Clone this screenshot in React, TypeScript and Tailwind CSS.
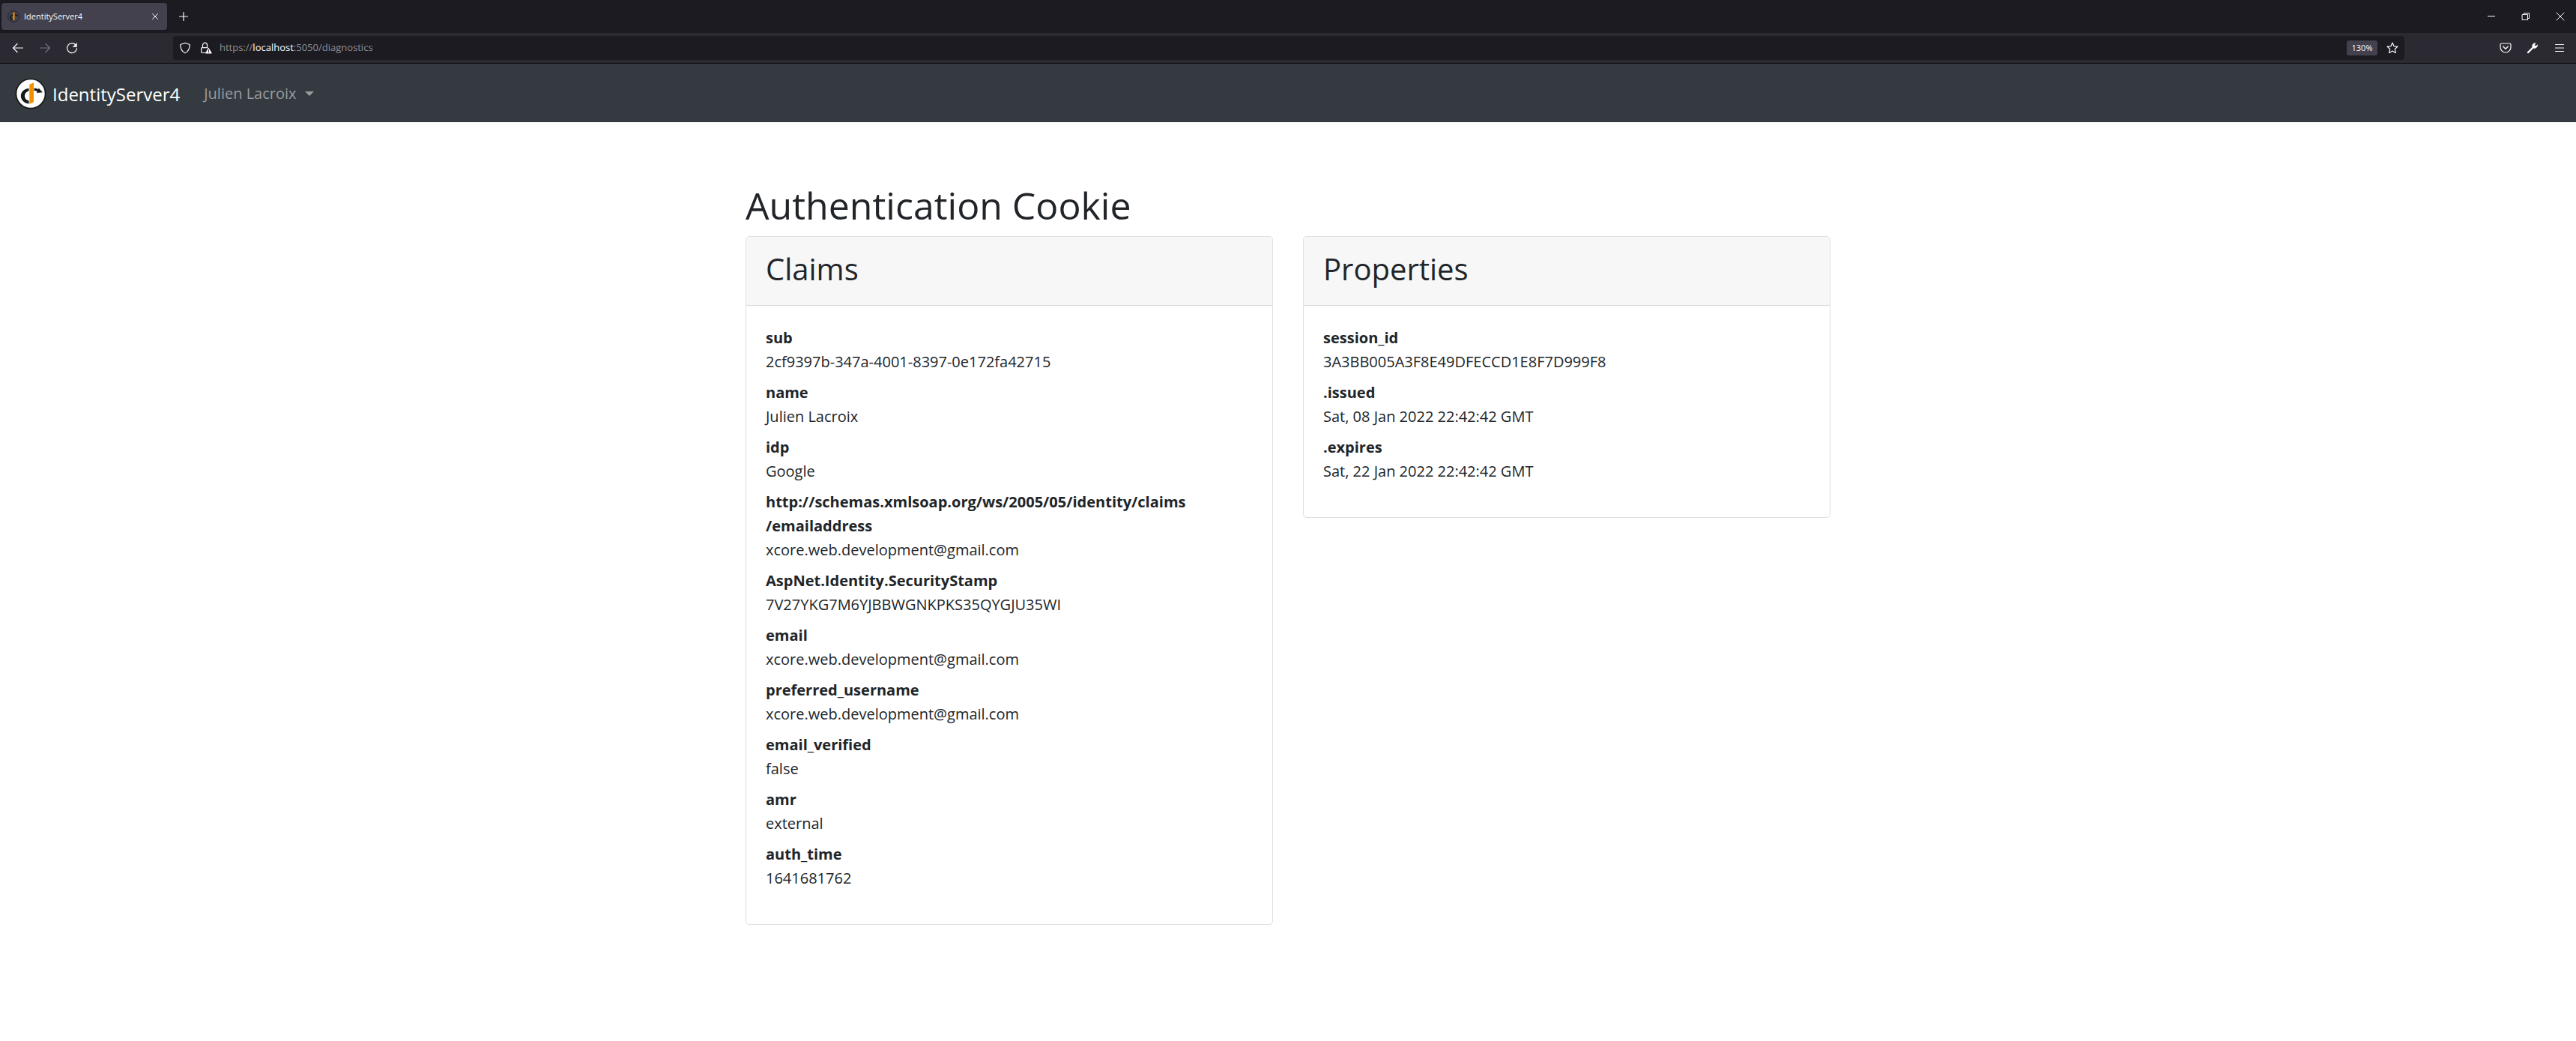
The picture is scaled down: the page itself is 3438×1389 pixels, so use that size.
import { ReactNode } from "react";

type Entry = { term: string; value: string };

const claims: Entry[] = [
  { term: "sub", value: "2cf9397b-347a-4001-8397-0e172fa42715" },
  { term: "name", value: "Julien Lacroix" },
  { term: "idp", value: "Google" },
  { term: "http://schemas.xmlsoap.org/ws/2005/05/identity/claims\n/emailaddress", value: "xcore.web.development@gmail.com" },
  { term: "AspNet.Identity.SecurityStamp", value: "7V27YKG7M6YJBBWGNKPKS35QYGJU35WI" },
  { term: "email", value: "xcore.web.development@gmail.com" },
  { term: "preferred_username", value: "xcore.web.development@gmail.com" },
  { term: "email_verified", value: "false" },
  { term: "amr", value: "external" },
  { term: "auth_time", value: "1641681762" },
];

const properties: Entry[] = [
  { term: "session_id", value: "3A3BB005A3F8E49DFECCD1E8F7D999F8" },
  { term: ".issued", value: "Sat, 08 Jan 2022 22:42:42 GMT" },
  { term: ".expires", value: "Sat, 22 Jan 2022 22:42:42 GMT" },
];

function Logo({ disc, className }: { disc: string; className: string }) {
  return (
    <svg viewBox="0 0 42 42" className={className} aria-hidden="true">
      <circle cx="21" cy="21" r="19.6" fill={disc} stroke="#18191b" strokeWidth="1.8" />
      <path d="M18.500 14C12 14.500 7.800 19 7.800 24c0 5.500 4.500 9.800 10.700 10.500v-4.300c-3.300-.6-5.500-3-5.500-6 0-3.200 2-6 5.500-6.700z" fill="#18191b" />
      <path d="M25.500 13.800c2 0 4 .4 5.600 1.400l.5-1.700 5.400 5.700-8.200.9 1-1.900c-1.300-.9-2.700-1.300-4.300-1.400z" fill="#18191b" />
      <path d="M19.300 8.700L25 6.200v26l-5.700 2.500z" fill="#f29100" />
    </svg>
  );
}

function Icon({ children, className = "" }: { children: ReactNode; className?: string }) {
  return (
    <svg
      viewBox="0 0 16 16"
      fill="none"
      stroke="currentColor"
      strokeWidth="1.2"
      strokeLinecap="round"
      strokeLinejoin="round"
      className={"size-4 " + className}
      aria-hidden="true"
    >
      {children}
    </svg>
  );
}

function IconButton({ label, className, children }: { label: string; className: string; children: ReactNode }) {
  return (
    <button type="button" aria-label={label} className={"flex h-8 shrink-0 items-center justify-center " + className}>
      {children}
    </button>
  );
}

function Card({ title, entries }: { title: string; entries: Entry[] }) {
  return (
    <section className="overflow-hidden rounded-[5px] border border-[#dfdfdf] bg-white">
      <header className="border-b border-[#d8d8d8] bg-[#f7f7f7] px-[26px] pt-[18px] pb-[23px]">
        <h2 className="text-[40px] leading-[50px]">{title}</h2>
      </header>
      <dl className="px-[26px] pt-[27px] pb-[36px] text-[20px]">
        {entries.map((e) => (
          <div key={e.term} className="mb-[10px]">
            <dt className="leading-8 font-bold whitespace-pre-line">{e.term}</dt>
            <dd className="leading-[31px]">{e.value}</dd>
          </div>
        ))}
      </dl>
    </section>
  );
}

export default function App() {
  return (
    <div className="min-h-screen bg-white font-['Open_Sans',sans-serif] text-[#212529]">
      <div className="flex h-11 items-center bg-[#1c1b22] text-[#fbfbfe]">
        <div className="ml-0.5 flex h-9 w-[221px] items-center rounded-sm bg-[#42414d] pl-2 shadow">
          <Logo disc="#42414d" className="size-4" />
          <span className="ml-1.5 grow text-[11px]">IdentityServer4</span>
          <IconButton label="Close tab" className="w-8">
            <Icon><path d="M4.500 4.500l7 7M11.500 4.500l-7 7" strokeWidth="1" /></Icon>
          </IconButton>
        </div>
        <IconButton label="New tab" className="ml-1.5 w-8">
          <Icon><path d="M8 2.500v11M2.500 8h11" /></Icon>
        </IconButton>
        <div className="ml-auto flex gap-1">
          <IconButton label="Minimize" className="w-[42px]">
            <Icon><path d="M3 7.500h10" strokeWidth="1" strokeLinecap="butt" /></Icon>
          </IconButton>
          <IconButton label="Restore" className="w-[42px]">
            <Icon><path d="M3.500 5.500h7v7h-7zM5.500 5.500v-2h7v7h-2" strokeWidth="1" strokeLinejoin="miter" /></Icon>
          </IconButton>
          <IconButton label="Close" className="w-[42px]">
            <Icon><path d="M3 3l10 10M13 3L3 13" strokeWidth="1" /></Icon>
          </IconButton>
        </div>
      </div>

      <div className="flex h-[41px] items-center border-b border-[#0c0c0d] bg-[#2b2a33] text-[#fbfbfe]">
        <div className="ml-2 flex gap-1">
          <IconButton label="Back" className="w-8">
            <Icon><path d="M14.500 8h-13M7 2.500L1.500 8 7 13.500" /></Icon>
          </IconButton>
          <IconButton label="Forward" className="w-8 text-[#76757c]">
            <Icon><path d="M1.500 8h13M9 2.500L14.500 8 9 13.500" /></Icon>
          </IconButton>
          <IconButton label="Reload" className="w-8">
            <Icon>
              <path d="M13.300 4.500A6.400 6.400 0 1 0 14.400 8.500" />
              <path d="M14.500 1.500v5h-5z" fill="currentColor" strokeWidth=".5" />
            </Icon>
          </IconButton>
        </div>
        <div className="ml-[119px] flex h-8 grow items-center rounded-sm bg-[#1c1b22] px-2">
          <Icon><path d="M8 1.200L14.300 3.500c0 5-1.500 9-6.300 11.300C3.200 12.500 1.700 8.500 1.700 3.500z" /></Icon>
          <Icon className="ml-3">
            <path d="M7 14.500H3a1.400 1.400 0 0 1-1.400-1.400V9A1.400 1.400 0 0 1 3 7.600h7M3.500 7.500V4.200a3 3 0 0 1 6 0V7.500" />
            <path d="M11.500 8.500l3.800 6.500H7.800z" fill="currentColor" strokeWidth="1" />
            <path d="M11.500 10.500v2M11.500 13.800v.2" stroke="#1c1b22" strokeWidth="1" />
          </Icon>
          <a href="#" className="ml-[10px] grow text-[13px] text-[#8f8f94]">
            https://<span className="text-[#fbfbfe]">localhost</span>:5050/diagnostics
          </a>
          <button type="button" className="h-5 w-[41px] rounded-[3px] bg-[#42414d] text-[11px] leading-5">130%</button>
          <button type="button" aria-label="Bookmark" className="ml-3">
            <Icon><path d="M8 1l2 4.600 5 .5-3.700 3.400 1 5L8 12l-4.300 2.500 1-5L1 6.100l5-.5z" /></Icon>
          </button>
        </div>
        <div className="ml-[119px] flex gap-1 pr-1.5">
          <IconButton label="Save to Pocket" className="w-8">
            <Icon>
              <path d="M2.500 2h11A1.500 1.500 0 0 1 15 3.500V7A7 7 0 0 1 1 7V3.500A1.500 1.500 0 0 1 2.500 2z" />
              <path d="M4.800 6L8 9.200 11.200 6" strokeWidth="1.400" />
            </Icon>
          </IconButton>
          <IconButton label="Developer tools" className="w-8">
            <Icon>
              <path d="M2 14l6.500-6.500" strokeWidth="2.400" />
              <path d="M14.600 4.200l-2.600 1.300-1.400-1.400L11.900 1.400a4 4 0 0 0-4 5.500l1.200 1.200a4 4 0 0 0 5.500-3.900z" fill="currentColor" strokeWidth=".6" />
            </Icon>
          </IconButton>
          <IconButton label="Menu" className="w-8">
            <Icon><path d="M2.500 3.500h11M2.500 8h11M2.500 12.500h11" /></Icon>
          </IconButton>
        </div>
      </div>

      <nav className="flex h-[78px] items-center bg-[#343a40] pt-0.5 pl-5">
        <a href="#" className="flex items-center text-[24px] leading-[39px] text-white">
          <Logo disc="#ffffff" className="size-[42px]" />
          <span className="ml-2">IdentityServer4</span>
        </a>
        <button type="button" className="ml-[32px] flex items-center text-[20px] text-[#999c9f]">
          Julien Lacroix
          <span className="ml-[11px] border-x-[6px] border-t-[6px] border-x-transparent border-t-[#999c9f]" />
        </button>
      </nav>

      <main className="mx-auto max-w-[1488px] px-5 pt-[80px]">
        <h1 className="pb-[10px] text-[50px] leading-[62px]">Authentication Cookie</h1>
        <div className="grid grid-cols-2 items-start gap-10">
          <Card title="Claims" entries={claims} />
          <Card title="Properties" entries={properties} />
        </div>
      </main>
    </div>
  );
}
